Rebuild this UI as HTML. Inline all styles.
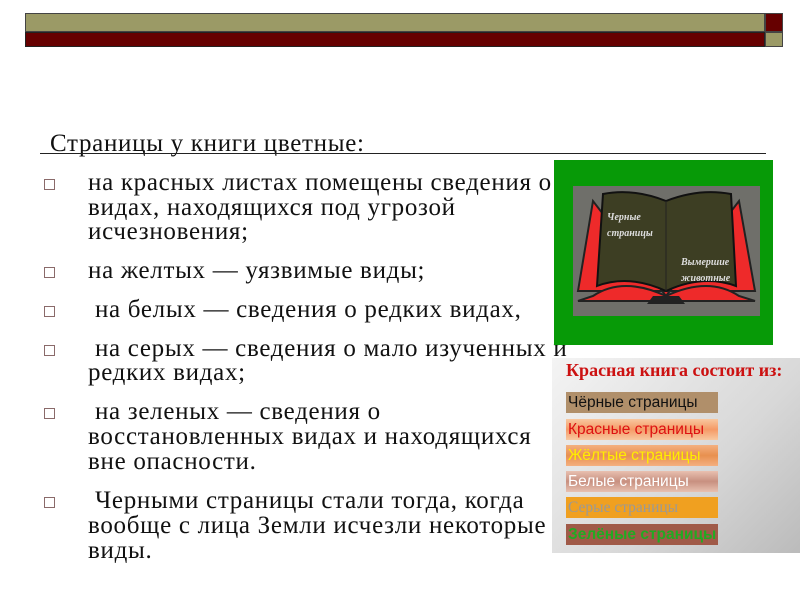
<!DOCTYPE html>
<html><head><meta charset="utf-8"><style>
body{margin:0;width:800px;height:600px;background:#fff;position:relative;overflow:hidden;font-family:"Liberation Serif",serif;}
.a{position:absolute}
.t{position:absolute;font-size:25px;letter-spacing:0.7px;line-height:25px;color:#111;white-space:nowrap}
.b{position:absolute;left:44px;width:9px;height:9px;border:1px solid #8a6a6a}
.pg{position:absolute;left:566px;width:152px;height:21px;font:15.5px "Liberation Sans",sans-serif;line-height:21px;padding-left:2px;box-sizing:border-box;white-space:nowrap;overflow:hidden}
</style></head><body>
<div class="a" style="left:25px;top:13px;width:740px;height:19px;background:#9b9a66;border:1px solid #444;box-sizing:border-box"></div>
<div class="a" style="left:765px;top:13px;width:18px;height:19px;background:#660000;border:1px solid #444;box-sizing:border-box"></div>
<div class="a" style="left:25px;top:32px;width:740px;height:15px;background:#660000;border:1px solid #222;box-sizing:border-box"></div>
<div class="a" style="left:765px;top:32px;width:18px;height:15px;background:#9b9a66;border:1px solid #444;box-sizing:border-box"></div>

<div class="t" style="left:50px;top:131px">Страницы у книги цветные:</div>
<div class="a" style="left:40px;top:153px;width:726px;height:1px;background:#222"></div>

<div class="b" style="top:179px"></div>
<div class="t" style="left:88px;top:170px">на красных листах помещены сведения о</div>
<div class="t" style="left:88px;top:195px">видах, находящихся под угрозой</div>
<div class="t" style="left:88px;top:219px">исчезновения;</div>
<div class="b" style="top:267px"></div>
<div class="t" style="left:88px;top:258px">на желтых — уязвимые виды;</div>
<div class="b" style="top:306px"></div>
<div class="t" style="left:88px;top:297px">&nbsp;на белых — сведения о редких видах,</div>
<div class="b" style="top:345px"></div>
<div class="t" style="left:88px;top:336px">&nbsp;на серых — сведения о мало изученных и</div>
<div class="t" style="left:88px;top:360px">редких видах;</div>
<div class="b" style="top:408px"></div>
<div class="t" style="left:88px;top:399px">&nbsp;на зеленых — сведения о</div>
<div class="t" style="left:88px;top:424px">восстановленных видах и находящихся</div>
<div class="t" style="left:88px;top:449px">вне опасности.</div>
<div class="b" style="top:497px"></div>
<div class="t" style="left:88px;top:488px">&nbsp;Черными страницы стали тогда, когда</div>
<div class="t" style="left:88px;top:513px">вообще с лица Земли исчезли некоторые</div>
<div class="t" style="left:88px;top:538px">виды.</div>

<div class="a" style="left:554px;top:160px;width:219px;height:185px;background:#079a07"></div>
<div class="a" style="left:573px;top:186px;width:187px;height:130px;background:#6f6f6a"></div>
<svg class="a" style="left:573px;top:186px" width="187" height="130" viewBox="0 0 187 130">
<path d="M5 105 L20 15 L93 110 L166 15 L182 105 Z" fill="#ee2a2a" stroke="#222" stroke-width="2"/>
<path d="M20 110 Q50 90 93 110 Q136 90 166 110 L182 115 L5 115 Z" fill="#ee2a2a" stroke="#222" stroke-width="2"/>
<path d="M30 8 Q60 2 93 15 Q126 2 158 8 L163 100 Q130 88 93 105 Q56 88 24 100 Z" fill="#3d3e23" stroke="#111" stroke-width="2"/>
<path d="M93 15 L93 105" stroke="#222"/>
<path d="M80 110 L106 110 L112 118 L74 118Z" fill="#222"/>
<text x="34" y="34" font-family="Liberation Serif" font-style="italic" font-weight="bold" font-size="10" fill="#ddd">Черные</text>
<text x="34" y="50" font-family="Liberation Serif" font-style="italic" font-weight="bold" font-size="10" fill="#ddd">страницы</text>
<text x="108" y="79" font-family="Liberation Serif" font-style="italic" font-weight="bold" font-size="10" fill="#ddd">Вымершие</text>
<text x="108" y="95" font-family="Liberation Serif" font-style="italic" font-weight="bold" font-size="10" fill="#ddd">животные</text>
</svg>

<div class="a" style="left:552px;top:358px;width:248px;height:195px;background:linear-gradient(135deg,#f4f4f4,#d8d8d8 60%,#bbb)"></div>
<div class="a" style="left:566px;top:360px;font:bold 18px 'Liberation Serif',serif;color:#cc1111;white-space:nowrap">Красная книга состоит из:</div>
<div class="pg" style="top:392px;background:#b08f6a;color:#111">Чёрные страницы</div>
<div class="pg" style="top:419px;background:linear-gradient(#f8c8a0,#f59a66,#f8c8a0);color:#dd1111">Красные страницы</div>
<div class="pg" style="top:445px;background:linear-gradient(#f4b080,#e8904f,#f4b080);color:#ffee00">Жёлтые страницы</div>
<div class="pg" style="top:471px;background:linear-gradient(#e8c0b0,#c89080,#e8c0b0);color:#fff">Белые страницы</div>
<div class="pg" style="top:497px;background:#f0a020;color:#999;font-family:'Liberation Serif',serif">Серые страницы</div>
<div class="pg" style="top:524px;background:#a05a48;color:#22aa22;font-weight:bold">Зелёные страницы</div>
</body></html>
